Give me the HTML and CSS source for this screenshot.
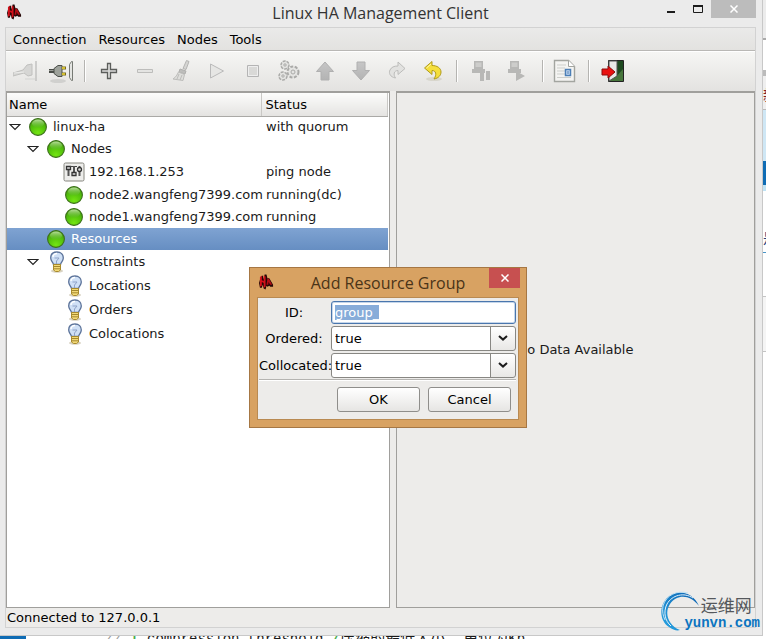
FILE: index.html
```html
<!DOCTYPE html>
<html lang="en">
<head>
    <meta charset="UTF-8">
    <meta name="viewport" content="width=device-width, initial-scale=1.0">
    <title>Linux HA Management Client</title>
    <link rel="stylesheet" href="styles.css">
</head>
<body>

<!-- Shared icons -->
<svg class="defs" aria-hidden="true">
    <defs>
        <radialGradient id="greenFill" cx="50%" cy="85%" r="80%">
            <stop offset="0" stop-color="#74e512"/>
            <stop offset="0.6" stop-color="#52c00c"/>
            <stop offset="1" stop-color="#48a010"/>
        </radialGradient>
        <linearGradient id="greenShine" x1="0" y1="0" x2="0" y2="1">
            <stop offset="0" stop-color="#b5dc98"/>
            <stop offset="1" stop-color="#5cb628" stop-opacity="0.3"/>
        </linearGradient>
        <linearGradient id="greyFill" x1="0" y1="0" x2="0" y2="1">
            <stop offset="0" stop-color="#c6c6c6"/>
            <stop offset="1" stop-color="#b3b3b3"/>
        </linearGradient>
        <linearGradient id="arcFill" x1="0" y1="1" x2="1" y2="0">
            <stop offset="0" stop-color="#2aa6e4"/>
            <stop offset="1" stop-color="#0a5fae"/>
        </linearGradient>
        <symbol id="ha" viewBox="0 0 16 16">
            <path d="M2 2l2-1 1 4 1-5h2l1 4h2l4 7v2h-3l-1-1-2 1-1-1-1 4-2-1-1-4-1 3H1L0 9z" fill="#240606"/>
            <path d="M1 3l2-2v5l2 1V1l2 1v11l-2 1V9L3 8v4l-2 1z" fill="#d3101a"/>
            <path d="M9 4l2 1 3 6h-2l-2-3v3H8z" fill="#b30d15"/>
        </symbol>
        <symbol id="green" viewBox="0 0 18 18">
            <circle cx="9" cy="9" r="8.4" fill="url(#greenFill)" stroke="#3c6e1c" stroke-width="1.1"/>
            <ellipse cx="9" cy="5.6" rx="6" ry="4" fill="url(#greenShine)"/>
        </symbol>
        <symbol id="bulb" viewBox="0 0 16 22">
            <ellipse cx="8" cy="20" rx="6" ry="1.8" fill="#d9d3c3"/>
            <path d="M8 1C4 1 1.700 3.500 1.700 7c0 3 2.300 4 2.800 6.500h7C12 11 14.300 10 14.300 7 14.300 3.500 12 1 8 1z" fill="#cfe0f6" stroke="#5b7299" stroke-width="1.300"/>
            <path d="M4 6c0-2 2-3.500 4-3.500" fill="none" stroke="#fff" stroke-width="1.500"/>
            <path d="M5.500 7h4.500L7.500 10v3" fill="none" stroke="#8fa3c8"/>
            <path d="M4.500 13.500h7v5.500l-2 1.500h-3l-2-1.500z" fill="#f3da78" stroke="#a88a2c"/>
            <path d="M5 15.500h6M5 17.800h6" stroke="#a4882f"/>
        </symbol>
        <symbol id="mixer" viewBox="0 0 22 20">
            <rect x="1" y="1" width="20" height="18" rx="1.500" fill="#ededeb" stroke="#86867f"/>
            <path d="M5.500 4v10M11 4v10M16.500 4v10" stroke="#555" stroke-width="2"/>
            <path d="M3.500 4.500h4v3h-4zM9 10.500h4v3H9z" fill="#ddd" stroke="#333" stroke-width="1.300"/>
            <circle cx="16.500" cy="7.500" r="2" fill="#ddd" stroke="#333" stroke-width="1.300"/>
            <path d="M7 4.500h3M12 4.500h2" stroke="#444"/>
        </symbol>
        <symbol id="expander" viewBox="0 0 12 8">
            <path d="M1 1.500h10L6 6.500z" fill="#fff" stroke="#222" stroke-width="1.200"/>
        </symbol>
        <symbol id="chevron" viewBox="0 0 10 6">
            <path d="M1 1l4 3.600L9 1" fill="none" stroke="#1c1c1c" stroke-width="2"/>
        </symbol>
        <symbol id="cross" viewBox="0 0 8 8">
            <path d="M0.500 0.500l7 7M7.500 0.500l-7 7" stroke="#fff" stroke-width="1.500"/>
        </symbol>
    </defs>
</svg>

<div class="window">
    <header class="titlebar">
        <svg class="app-icon"><use href="#ha"/></svg>
        <h1>Linux HA Management Client</h1>
        <div class="window-buttons">
            <button class="win-btn" aria-label="Minimize"><svg width="8" height="10" viewBox="0 0 8 10"><path d="M0 8h8" stroke="#1c1c1c" stroke-width="2"/></svg></button>
            <button class="win-btn" aria-label="Maximize"><svg width="10" height="8" viewBox="0 0 10 8"><path d="M0.500 1v6.500h9V1" fill="none" stroke="#1c1c1c"/><path d="M0 1h10" stroke="#1c1c1c" stroke-width="2"/></svg></button>
            <button class="win-btn win-close" aria-label="Close"><svg width="8" height="8"><use href="#cross"/></svg></button>
        </div>
    </header>

    <div class="frame">
        <nav class="menubar">
            <button>Connection</button>
            <button>Resources</button>
            <button>Nodes</button>
            <button>Tools</button>
        </nav>

        <div class="toolbar">
            <button aria-label="Login" disabled>
                <svg viewBox="0 0 24 24"><path d="M0 14l10-3 4-5 5-1v11l-4 1-4-3-11 3z" fill="#d6d6d4" stroke="#c0c0be"/><path d="M1 14l10-1" stroke="#ececea"/><path d="M23 2v20" stroke="#c2c2c0" stroke-width="1.500"/><path d="M12 20h10" stroke="#dededc" stroke-width="2"/></svg>
            </button>
            <button aria-label="Logout">
                <svg viewBox="0 0 24 24"><ellipse cx="9" cy="22" rx="8" ry="2" fill="#d0d0ce"/><path d="M0 12h6" stroke="#4b4e49" stroke-width="4"/><path d="M0 11.500h6" stroke="#9b9e99"/><path d="M5 9.500l4-3h4v11H9l-4-3z" fill="#9ea29b" stroke="#4b4e49"/><path d="M13 9h4M13 15h4" stroke="#77691c" stroke-width="3"/><path d="M13 9h3M13 15h3" stroke="#f1da36" stroke-width="1.500"/><path d="M23.500 2.500h-1l-2 3v13l2 3h1z" fill="#e4e5e2" stroke="#777a74"/></svg>
            </button>
            <span class="sep"></span>
            <button aria-label="Add Resource">
                <svg viewBox="0 0 24 24"><path d="M10.500 4.500h3v6h6v3h-6v6h-3v-6h-6v-3h6z" fill="#dcdddb" stroke="#5c5e5b" stroke-width="1.300"/></svg>
            </button>
            <button aria-label="Remove" disabled>
                <svg viewBox="0 0 24 24"><path d="M4.500 10.500h15v3h-15z" fill="#e4e4e2" stroke="#bdbdbb"/></svg>
            </button>
            <button aria-label="Clean Up" disabled>
                <svg viewBox="0 0 24 24"><path d="M17.500 1.500l2.500 1-3 8-3-1z" fill="#d5d5d3" stroke="#b4b4b2"/><path d="M11 10l6 2-1 3-6-2z" fill="#bdbdbb" stroke="#b0b0ae"/><path d="M9.500 13l6 2.500-1.500 6-10-1.500c3-2 4-4 5.500-7z" fill="#dededb" stroke="#bcbcba"/><path d="M10 15l-2 5M13 16l-2 5" stroke="#bcbcba"/></svg>
            </button>
            <button aria-label="Start" disabled>
                <svg viewBox="0 0 24 24"><path d="M5.500 5l13 7-13 7z" fill="#e6e6e4" stroke="#bababa"/></svg>
            </button>
            <button aria-label="Stop" disabled>
                <svg viewBox="0 0 24 24"><path d="M6.500 6.500h11v11h-11z" fill="#d9d9d7" stroke="#b4b4b4"/><path d="M7.500 7.500h9v9h-9z" fill="none" stroke="#eee"/></svg>
            </button>
            <button aria-label="Default" disabled>
                <svg viewBox="0 0 24 24"><g fill="#e4e4e2" stroke="#aaaaa8"><circle cx="8" cy="6" r="4" stroke-width="1.500" stroke-dasharray="3 1"/><circle cx="6" cy="17" r="4" stroke-width="1.500" stroke-dasharray="3 1"/><circle cx="16" cy="13" r="5.500" stroke-width="2" stroke-dasharray="3 1.500"/><circle cx="16" cy="13" r="2"/><circle cx="8" cy="6" r="1.200"/><circle cx="6" cy="17" r="1.200"/></g></svg>
            </button>
            <button aria-label="Move Up" disabled>
                <svg viewBox="0 0 24 24"><path d="M12 3l8.500 9.500H16v8.500H8v-8.500H3.500z" fill="url(#greyFill)" stroke="#b0b0b0"/></svg>
            </button>
            <button aria-label="Move Down" disabled>
                <svg viewBox="0 0 24 24"><path d="M12 21l8.500-9.500H16V3H8v8.500H3.500z" fill="url(#greyFill)" stroke="#b0b0b0"/></svg>
            </button>
            <button aria-label="Migrate" disabled>
                <svg viewBox="0 0 24 24"><path d="M13 3l7 6.500-7 6v-4c-4 0-5 4-2.500 7.500C5 18 3.500 14 5 11c1.500-3 4-4 8-4z" fill="#e2e2e0" stroke="#bcbcba"/></svg>
            </button>
            <button aria-label="Clear Constraints">
                <svg viewBox="0 0 24 24"><ellipse cx="13" cy="20" rx="8" ry="2" fill="#d8d6cc"/><path d="M11 2.500l-7.500 6.500 7.500 6.500v-4c4 0 5 4 2 8.500 5-1 7-4 7-7 0-4-4-6.500-9-6.500z" fill="#f5df3c" stroke="#b09b1b"/><path d="M10 5l-4.500 4" stroke="#fff8b0"/></svg>
            </button>
            <span class="sep"></span>
            <button aria-label="Standby" disabled>
                <svg viewBox="0 0 24 24"><path d="M5 2h9v8H5zM3 10h13v4H3zM11 14h4v8h-4zM17 12h4v9h-4z" fill="#b8b8b6"/><path d="M6.500 3.500h6V8h-6z" fill="#cdcdcb"/></svg>
            </button>
            <button aria-label="Active" disabled>
                <svg viewBox="0 0 24 24"><path d="M5 2h9v8H5zM3 10h13v4H3zM11 12l9 5-9 5z" fill="#b8b8b6"/><path d="M6.500 3.500h6V8h-6z" fill="#cdcdcb"/></svg>
            </button>
            <span class="sep wide"></span>
            <button aria-label="View Transition Information">
                <svg viewBox="0 0 24 24"><path d="M1.500 1.500h14l6 6v15h-20z" fill="#f4f4f2" stroke="#a3a5a0" stroke-width="1.400"/><path d="M15.500 1.500v6h6" fill="#fff" stroke="#a3a5a0"/><path d="M4 6h9M4 9h8M4 12h8M4 15h8M4 18.500h14" stroke="#cdcfcb"/><path d="M12.500 10.500h5v6h-5z" fill="#c7daf0" stroke="#4c7fb6" stroke-width="1.500"/><path d="M15 12v3" stroke="#4c7fb6"/></svg>
            </button>
            <span class="sep"></span>
            <button aria-label="Exit">
                <svg viewBox="0 0 24 24"><path d="M7.500 1.500h15v21h-15z" fill="#47763c" stroke="#222"/><path d="M15 2h7v8l-7 8z" fill="#1e4a20"/><path d="M8 2h8v15l-8 5z" fill="#e9e9e7" stroke="#555"/><path d="M1 10h6V7l7 6-7 6v-3H1z" fill="#ea1111" stroke="#8d0b0b"/></svg>
            </button>
        </div>

        <main class="panes">
            <section class="pane tree-pane">
                <table class="tree">
                    <thead>
                        <tr><th class="col-name">Name</th><th>Status</th></tr>
                    </thead>
                    <tbody>
                        <tr><td><div class="node"><svg class="exp"><use href="#expander"/></svg><svg class="dot"><use href="#green"/></svg>linux-ha</div></td><td>with quorum</td></tr>
                        <tr><td><div class="node level-1"><svg class="exp"><use href="#expander"/></svg><svg class="dot"><use href="#green"/></svg>Nodes</div></td><td></td></tr>
                        <tr class="tall"><td><div class="node level-2"><svg class="mixer"><use href="#mixer"/></svg>192.168.1.253</div></td><td>ping node</td></tr>
                        <tr><td><div class="node level-2"><svg class="dot"><use href="#green"/></svg>node2.wangfeng7399.com</div></td><td>running(dc)</td></tr>
                        <tr><td><div class="node level-2"><svg class="dot"><use href="#green"/></svg>node1.wangfeng7399.com</div></td><td>running</td></tr>
                        <tr class="selected"><td><div class="node level-1 leaf"><svg class="dot"><use href="#green"/></svg>Resources</div></td><td></td></tr>
                        <tr class="tall"><td><div class="node level-1"><svg class="exp"><use href="#expander"/></svg><svg class="bulb"><use href="#bulb"/></svg>Constraints</div></td><td></td></tr>
                        <tr class="tall"><td><div class="node level-2"><svg class="bulb"><use href="#bulb"/></svg>Locations</div></td><td></td></tr>
                        <tr class="tall"><td><div class="node level-2"><svg class="bulb"><use href="#bulb"/></svg>Orders</div></td><td></td></tr>
                        <tr class="tall"><td><div class="node level-2"><svg class="bulb"><use href="#bulb"/></svg>Colocations</div></td><td></td></tr>
                    </tbody>
                </table>
            </section>
            <section class="pane info-pane">No Data Available</section>
        </main>

        <footer class="status">Connected to 127.0.0.1</footer>
    </div>

    <form class="dialog" role="dialog" aria-labelledby="dialogTitle">
        <div class="dialog-title">
            <svg class="app-icon"><use href="#ha"/></svg>
            <h2 id="dialogTitle">Add Resource Group</h2>
            <button type="button" class="dialog-close" aria-label="Close"><svg width="8" height="8"><use href="#cross"/></svg></button>
        </div>
        <div class="dialog-body">
            <div class="fields">
                <label for="groupId">ID:</label>
                <input id="groupId" type="text" value="group_" autocomplete="off" spellcheck="false">
                <label for="ordered">Ordered:</label>
                <div class="combo">
                    <select id="ordered"><option>true</option><option>false</option></select>
                    <svg><use href="#chevron"/></svg>
                </div>
                <label for="collocated">Collocated:</label>
                <div class="combo">
                    <select id="collocated"><option>true</option><option>false</option></select>
                    <svg><use href="#chevron"/></svg>
                </div>
            </div>
            <div class="dialog-buttons">
                <button type="button">OK</button>
                <button type="button">Cancel</button>
            </div>
        </div>
    </form>
</div>

<!-- Page behind the window -->
<div class="behind-right">
    <span class="strip strip-top"></span>
    <span class="strip strip-red">新</span>
    <span class="strip strip-sky"></span>
    <span class="strip strip-blue"></span>
    <span class="strip strip-text">是</span>
    <span class="strip strip-rest"></span>
</div>
<div class="behind-bottom">
    <span class="task"></span>
    <code><i>//</i> <b>|</b> compression_threshold <b>/</b><span>压缩的最低大小, 单位为</span>Kb</code>
</div>

<div class="watermark">
    <svg viewBox="0 0 40 40">
        <path d="M39 15C34 3 21-2 11 4-1 11-2 29 9 36c4 3 8 4 11 3C8 34 4 22 10 13 17 3 30 3 39 15z" fill="url(#arcFill)"/>
        <path d="M33 7C24 1 12 4 7 13c-4 8-2 17 4 22" fill="none" stroke="#e6f3fb"/>
        <path d="M28 2C17-1 6 4 3 15c-1 5 0 10 2 14" fill="none" stroke="#bfe2f5"/>
    </svg>
    <div class="mark-text">
        <span lang="zh">运维网</span>
        <strong>yunvn.com</strong>
    </div>
</div>

<script>
    const groupId = document.getElementById('groupId');
    groupId.focus();
    groupId.select();
</script>

</body>
</html>
```
FILE: styles.css
```css
* {
    box-sizing: border-box;
}
body {
    margin: 0;
    height: 100vh;
    display: grid;
    grid-template-columns: 1fr 3px;
    grid-template-rows: 1fr 3px;
    overflow: hidden;
    position: relative;
    background: #fff;
    color: #1a1a1a;
    font: 13px/18px "DejaVu Sans", sans-serif;
}
button, input, select {
    font: inherit;
    color: inherit;
    margin: 0;
}
svg {
    display: block;
    flex: none;
}
.defs {
    position: absolute;
    width: 0;
    height: 0;
}

/* Main window */
.window {
    position: relative;
    display: flex;
    flex-direction: column;
    min-height: 0;
    padding: 0 6px 7px 5px;
    background: #ebebeb;
    border-right: 1px solid #c8c8c8;
    border-bottom: 1px solid #c8c8c8;
}
.titlebar {
    display: grid;
    grid-template-columns: 100px 1fr 100px;
    height: 27px;
}
.app-icon {
    width: 15px;
    height: 16px;
    margin: 4px 2px;
}
h1, h2 {
    margin: 0;
    font: 16px/26px "Open Sans", sans-serif;
    text-align: center;
    color: #333;
}
.window-buttons {
    display: flex;
    justify-content: flex-end;
    align-items: flex-start;
}
.win-btn {
    display: flex;
    align-items: center;
    justify-content: center;
    flex: none;
    width: 27px;
    height: 18px;
    padding: 0;
    border: none;
    background: none;
}
.win-close {
    width: 45px;
    background: #bcbcbc;
}
.frame {
    flex: 1;
    display: flex;
    flex-direction: column;
    min-height: 0;
    border: 1px solid #d2d2d2;
    background: #edecea;
}
.menubar {
    display: flex;
    height: 23px;
    padding: 1px 1px 0;
    background: linear-gradient(#eaeae9, #e3e2e0);
    border-bottom: 1px solid #b9b8b5;
    color: #000;
}
.menubar button {
    padding: 0 6px;
    border: none;
    background: none;
}
.toolbar {
    display: flex;
    align-items: center;
    height: 40px;
    padding: 0 1px 1px;
    background: linear-gradient(#f6f6f4, #e3e2e0);
    border-top: 1px solid #fff;
}
.toolbar button {
    display: flex;
    align-items: center;
    justify-content: center;
    width: 36px;
    height: 34px;
    padding: 0;
    border: none;
    background: none;
}
.toolbar svg {
    width: 24px;
    height: 24px;
}
.sep {
    width: 2px;
    height: 22px;
    margin: 0 5px;
    border-left: 1px solid #b5b4b1;
    border-right: 1px solid #fff;
}
.sep.wide {
    margin: 0 3px 0 7px;
}

/* Panes */
.panes {
    flex: 1;
    display: grid;
    grid-template-columns: 384px 1fr;
    gap: 6px;
    min-height: 0;
}
.pane {
    border: 1px solid #a09f9c;
    border-top-width: 2px;
    min-width: 0;
}
.tree-pane {
    padding-right: 1px;
    background: #fff;
}
.info-pane {
    display: flex;
    align-items: center;
    justify-content: center;
}
.tree {
    width: 100%;
    table-layout: fixed;
    border-collapse: collapse;
    white-space: nowrap;
}
.tree th {
    height: 23px;
    padding: 2px 4px 0;
    text-align: left;
    font-weight: normal;
    background: linear-gradient(#fcfcfb, #e4e3e1);
    border-bottom: 1px solid #aaa9a6;
    border-right: 1px solid #c9c8c5;
    color: #000;
}
.tree .col-name {
    width: 254px;
    padding: 2px 2px 0;
}
.tree td {
    height: 22px;
    padding: 0 5px;
    line-height: 20px;
}
.tree td:first-child {
    padding: 0 0 0 2px;
}
.tree .tall td {
    height: 24px;
}
.tree .selected {
    background: linear-gradient(#7fa3d2, #668ec2);
    color: #fff;
}
.node {
    display: flex;
    align-items: center;
}
.level-1 {
    padding-left: 18px;
}
.level-2 {
    padding-left: 54px;
}
.leaf {
    padding-left: 38px;
}
.exp {
    width: 12px;
    height: 8px;
    margin-right: 8px;
}
.dot {
    width: 18px;
    height: 18px;
    margin-right: 6px;
}
.level-2 .dot {
    margin-left: 2px;
}
.mixer {
    width: 22px;
    height: 20px;
    margin-right: 4px;
}
.bulb {
    width: 16px;
    height: 22px;
    margin: 0 6px 0 2px;
}
.level-2 .bulb {
    margin-left: 4px;
}
.status {
    height: 19px;
    padding: 1px;
    color: #000;
}

/* Add Resource Group dialog */
.dialog {
    position: absolute;
    left: 249px;
    top: 267px;
    width: 278px;
    padding: 0 7px 7px;
    background: #d8a262;
    border: 1px solid #a67744;
}
.dialog-title {
    display: grid;
    grid-template-columns: 30px 1fr 30px;
    height: 29px;
}
.dialog-title .app-icon {
    margin: 6px 2px;
}
h2 {
    line-height: 30px;
    color: #4a3418;
}
.dialog-close {
    display: flex;
    align-items: center;
    justify-content: center;
    width: 31px;
    height: 20px;
    padding: 0;
    border: none;
    background: #c75050;
}
.dialog-body {
    padding: 3px 2px 7px 1px;
    background: #edecea;
    border: 1px solid #b98a52;
    color: #000;
}
.fields {
    display: grid;
    grid-template-columns: 70px 1fr;
    align-items: center;
    gap: 2px;
    padding-bottom: 1px;
    border-bottom: 1px solid #b5b4b1;
}
.fields label {
    text-align: center;
    white-space: nowrap;
}
.fields input {
    width: 100%;
    height: 23px;
    padding: 0 3px;
    background: #fff;
    border: 1px solid #4a76ad;
    border-radius: 3px;
    outline: none;
    box-shadow: inset 0 0 0 1px #c5d6ea;
}
.fields input::selection {
    background: rgba(134, 171, 217, 0.99);
    color: #fff;
}
.combo {
    position: relative;
}
.combo select {
    display: block;
    width: 100%;
    height: 25px;
    padding: 0 28px 0 3px;
    appearance: none;
    border: 1px solid #888783;
    border-radius: 3px;
    background: linear-gradient(#888783, #888783) right 24px top / 1px 100% no-repeat,
                linear-gradient(#fff, #e8e7e5) right top / 24px 100% no-repeat,
                #fff;
}
.combo svg {
    position: absolute;
    right: 8px;
    top: 9px;
    width: 10px;
    height: 6px;
    pointer-events: none;
}
.dialog-buttons {
    display: flex;
    justify-content: flex-end;
    gap: 8px;
    padding: 6px 5px 0;
    border-top: 1px solid #fff;
}
.dialog-buttons button {
    width: 83px;
    height: 25px;
    padding: 0;
    background: linear-gradient(#fff, #e6e5e3);
    border: 1px solid #8f8e8b;
    border-radius: 3px;
}

/* Slivers of the page behind */
.behind-right {
    display: flex;
    flex-direction: column;
    overflow: hidden;
}
.strip {
    flex: none;
    overflow: hidden;
    font: 14px/24px "Noto Sans CJK SC", sans-serif;
}
.strip-top {
    height: 76px;
    background: linear-gradient(#ececec 38px, #aaa 38px, #aaa 40px, #fff 40px, #fff 70px, #bbb 70px);
}
.strip-red {
    height: 34px;
    padding-top: 6px;
    color: #8a1f1f;
    background: #efefef;
    border-bottom: 1px solid #bbb;
}
.strip-sky {
    height: 51px;
    background: #cfe7f5;
}
.strip-blue {
    height: 24px;
    background: #0f6cb4;
}
.strip-text {
    height: 68px;
    padding-top: 34px;
    color: #1d3f7c;
    border-top: 6px solid #bfe3f5;
    border-bottom: 1px solid #4a95c8;
}
.strip-rest {
    height: 99px;
    border-bottom: 1px solid #c4c4c4;
    background: linear-gradient(#fff 43px, #c4c4c4 43px, #c4c4c4 44px, #f5f5f5 44px);
}
.behind-bottom {
    grid-column: 1 / -1;
    display: flex;
    align-items: flex-start;
    gap: 79px;
    overflow: hidden;
}
.task {
    width: 26px;
    height: 3px;
    background: #0f6cb4;
}
.behind-bottom code {
    margin-top: -4px;
    font: 14px/14px "Liberation Mono", "Noto Sans CJK SC", monospace;
    white-space: nowrap;
}
.behind-bottom code span {
    font-size: 15px;
}
.behind-bottom i {
    color: #999;
}
.behind-bottom b {
    color: #4caf50;
}

/* Site mark over the lower right corner */
.watermark {
    position: absolute;
    right: 6px;
    bottom: 8px;
    display: flex;
    align-items: flex-end;
}
.watermark svg {
    width: 40px;
    height: 40px;
}
.mark-text {
    display: flex;
    flex-direction: column;
    align-items: center;
    margin-left: -16px;
}
.mark-text span {
    padding-left: 8px;
    font: 17px/20px "Noto Sans CJK SC", sans-serif;
    color: #55585c;
}
.mark-text strong {
    font: bold 14px/16px "Liberation Mono", monospace;
    color: #0b74c0;
}
```
